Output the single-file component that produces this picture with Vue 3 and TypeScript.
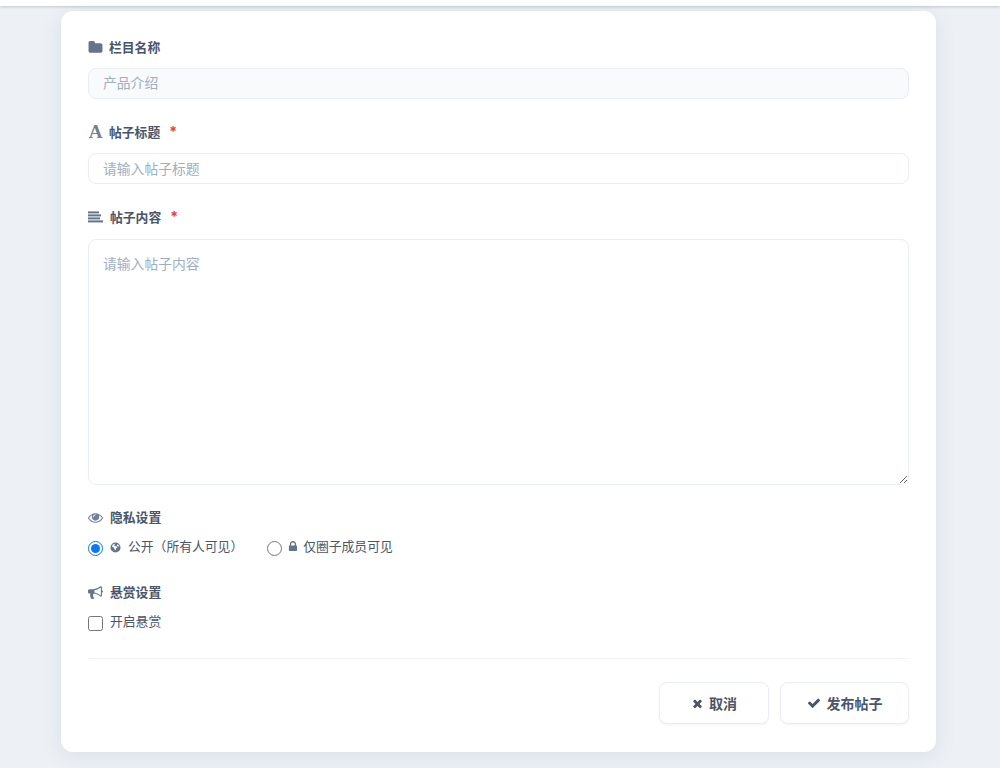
<script setup lang="ts">
interface Field {
  key: string
  title: string
}
const fields: Field[] = []
void fields
</script>

<template>
  <div class="page">
    <div class="topbar"></div>
    <form class="card" @submit.prevent>
      <div class="field f1">
        <label class="label">
          <svg class="ico" viewBox="0 0 1792 1792" width="15" height="15"><path fill="#64748b" d="M1728 608v704q0 92-66 158t-158 66h-1216q-92 0-158-66t-66-158v-960q0-92 66-158t158-66h320q92 0 158 66t66 158v32h672q92 0 158 66t66 158z"/></svg>
          <span class="ltext">栏目名称</span>
        </label>
        <input class="input disabled" type="text" value="产品介绍" disabled />
      </div>

      <div class="field f2">
        <label class="label">
          <span class="ico a-ico">A</span>
          <span class="ltext">帖子标题</span><span class="req">*</span>
        </label>
        <input class="input" type="text" placeholder="请输入帖子标题" />
      </div>

      <div class="field f3">
        <label class="label wide">
          <svg class="ico" viewBox="0 0 15 12" width="15" height="12"><g fill="#64748b"><rect x="0" y="0.400" width="11" height="2"/><rect x="0" y="3.400" width="13" height="2"/><rect x="0" y="6.400" width="12" height="2"/><rect x="0" y="9.400" width="15" height="2"/></g></svg>
          <span class="ltext">帖子内容</span><span class="req">*</span>
        </label>
        <textarea class="input area" placeholder="请输入帖子内容"></textarea>
      </div>

      <div class="field f4">
        <label class="label wide">
          <svg class="ico" viewBox="0 0 1792 1792" width="15" height="15"><path fill="#718096" d="M1664 960q-152-236-381-353 61 104 61 225 0 185-131.500 316.500t-316.500 131.500-316.500-131.500-131.500-316.500q0-121 61-225-229 117-381 353 133 205 333.500 326.500t434.500 121.500 434.500-121.500 333.500-326.500zm-720-384q0-20-14-34t-34-14q-125 0-214.500 89.500t-89.500 214.500q0 20 14 34t34 14 34-14 14-34q0-86 61-147t147-61q20 0 34-14t14-34zm848 384q0 34-20 69-140 230-376.500 368.500t-499.500 138.500-499.500-139-376.500-368q-20-35-20-69t20-69q140-229 376.500-368t499.500-139 499.500 139 376.500 368q20 35 20 69z"/></svg>
          <span class="ltext">隐私设置</span>
        </label>
        <div class="radios">
          <label class="opt">
            <input class="radio" type="radio" name="privacy" checked />
            <svg class="mini" viewBox="0 0 12 12" width="11" height="11"><path fill="#64748b" fill-rule="evenodd" d="M6 .5a5.500 5.500 0 1 1 0 11 5.500 5.500 0 0 1 0-11zM3 2.600l-.8 2.600 2 .8.800 2.200 1.200.8.300-1.900 1.700-1.500-1.700-1.200-1.300.2-.7-1.300 1.500-1.300c-1.100-.1-2.100.2-3 .9zM8.200 2.500 7.300 4l1.500 1 1.400-.3C9.800 3.800 9.100 3 8.200 2.500z"/></svg>
            <span class="otext">公开（所有人可见）</span>
          </label>
          <label class="opt">
            <input class="radio" type="radio" name="privacy" />
            <svg class="mini lock" viewBox="192 128 1280 1408" width="9" height="10"><path fill="#64748b" d="M640 768h512v-192q0-106-75-181t-181-75-181 75-75 181v192zm832 96v576q0 40-28 68t-68 28h-960q-40 0-68-28t-28-68v-576q0-40 28-68t68-28h32v-192q0-184 132-316t316-132 316 132 132 316v192h32q40 0 68 28t28 68z"/></svg>
            <span class="otext">仅圈子成员可见</span>
          </label>
        </div>
      </div>

      <div class="field f5">
        <label class="label wide">
          <svg class="ico" viewBox="0 0 1792 1792" width="15" height="15"><path fill="#64748b" d="M1664 640q53 0 90.500 37.500t37.500 90.500-37.500 90.500-90.500 37.500v384q0 52-38 90t-90 38q-417-347-812-380-58 19-91 66t-31 100.500 40 92.500q-20 33-23 65.500t6 58 33.500 55 48 50 61.500 50.500q-29 58-111.500 83t-168.500 11.500-132-55.500q-7-23-29.500-87.500t-32-94.500-23-89-15-101 3.500-98.500 22-110.500h-122q-66 0-113-47t-47-113v-192q0-66 47-113t113-47h480q435 0 896-384 52 0 90 38t38 90v384zm-128 604v-954q-394 302-768 343v270q377 42 768 341z"/></svg>
          <span class="ltext">悬赏设置</span>
        </label>
        <label class="opt check">
          <input class="checkbox" type="checkbox" />
          <span class="otext">开启悬赏</span>
        </label>
      </div>

      <div class="actions">
        <button class="btn cancel" type="button">
          <svg viewBox="0 0 1792 1792" width="13" height="13"><path fill="#4a5568" d="M1490 1322q0 40-28 68l-136 136q-28 28-68 28t-68-28l-294-294-294 294q-28 28-68 28t-68-28l-136-136q-28-28-28-68t28-68l294-294-294-294q-28-28-28-68t28-68l136-136q28-28 68-28t68 28l294 294 294-294q28-28 68-28t68 28l136 136q28 28 28 68t-28 68l-294 294 294 294q28 28 28 68z"/></svg>
          <span>取消</span>
        </button>
        <button class="btn publish" type="submit">
          <svg viewBox="0 0 1792 1792" width="14" height="14"><path fill="#4a5568" d="M1671 566q0 40-28 68l-724 724-136 136q-28 28-68 28t-68-28l-136-136-362-362q-28-28-28-68t28-68l136-136q28-28 68-28t68 28l294 295 656-657q28-28 68-28t68 28l136 136q28 28 28 68z"/></svg>
          <span>发布帖子</span>
        </button>
      </div>
    </form>
  </div>
</template>

<style>
html, body { margin: 0; background: #edf1f6; }
</style>

<style scoped>
.page {
  min-height: 768px;
  background: #edf1f6;
  font-family: "Inter", "Noto Sans CJK SC", "Liberation Sans", sans-serif;
  padding-bottom: 16px;
  box-sizing: border-box;
}
.topbar {
  height: 6px;
  background: #fff;
  box-shadow: 0 1px 3px rgba(0, 0, 0, 0.18);
}
.card {
  box-sizing: border-box;
  width: 875px;
  height: 741px;
  margin: 5px 0 0 61px;
  padding: 27px;
  background: #fff;
  border-radius: 12px;
  box-shadow: 0 4px 20px rgba(100, 116, 139, 0.14);
}
.field { display: flex; flex-direction: column; }
.label {
  box-sizing: border-box;
  display: flex;
  align-items: center;
  height: 18px;
  padding-bottom: 2px;
  font-size: 12.8px;
  font-weight: 700;
  color: #4a5568;
}
.ico { flex: none; width: 15px; margin: 2px 6px 0 0; }
.wide .ico { margin-right: 7px; }
.a-ico {
  font-family: "Liberation Serif", serif;
  font-size: 19px;
  font-weight: 700;
  color: #718096;
  text-align: center;
  line-height: 18px;
}
.req { color: #e53e3e; margin-left: 9px; font-size: 14px; }
.input {
  box-sizing: border-box;
  width: 821px;
  height: 31px;
  padding: 0 14px;
  border: 1px solid #e9eef5;
  border-radius: 8px;
  background: #fff;
  font-family: inherit;
  font-size: 13.8px;
  color: #4a5568;
  outline: none;
}
.input::placeholder { color: #a0aec0; opacity: 1; }
.disabled {
  padding-bottom: 3px;
  background: #f8fafc;
  color: #a0aec0;
  -webkit-text-fill-color: #a0aec0;
  opacity: 1;
}
.area {
  display: block;
  height: 246px;
  padding: 14px;
  line-height: 20px;
  resize: vertical;
}
.f1 { gap: 12px; }
.f2 { margin-top: 24px; gap: 12px; }
.f3 { margin-top: 24px; gap: 13px; }
.f4 { margin-top: 23px; gap: 12px; }
.f5 { margin-top: 27px; gap: 12px; }
.radios { display: flex; align-items: center; gap: 24px; height: 18px; }
.opt {
  display: flex;
  align-items: center;
  font-size: 12.8px;
  color: #4a5568;
}
.otext { margin-bottom: 4px; }
.radio, .checkbox {
  width: 15px;
  height: 15px;
  margin: 2px 0 0 0;
  accent-color: #0b78f0;
}
.mini { flex: none; margin: 0 7px; }
.lock { margin: 0 6px 2px; }
.check { height: 18px; gap: 7px; }
.actions {
  display: flex;
  justify-content: flex-end;
  gap: 11px;
  margin-top: 27px;
  padding-top: 23px;
  border-top: 1px solid #f1f5f9;
}
.btn {
  display: flex;
  align-items: center;
  justify-content: center;
  gap: 5px;
  height: 42px;
  background: #fff;
  border: 1px solid #e9eef5;
  border-radius: 8px;
  font-family: inherit;
  font-size: 14px;
  font-weight: 700;
  color: #4a5568;
  box-shadow: 0 1px 2px rgba(100, 116, 139, 0.08);
}
.cancel { width: 110px; }
.publish { width: 129px; gap: 6px; }
</style>
